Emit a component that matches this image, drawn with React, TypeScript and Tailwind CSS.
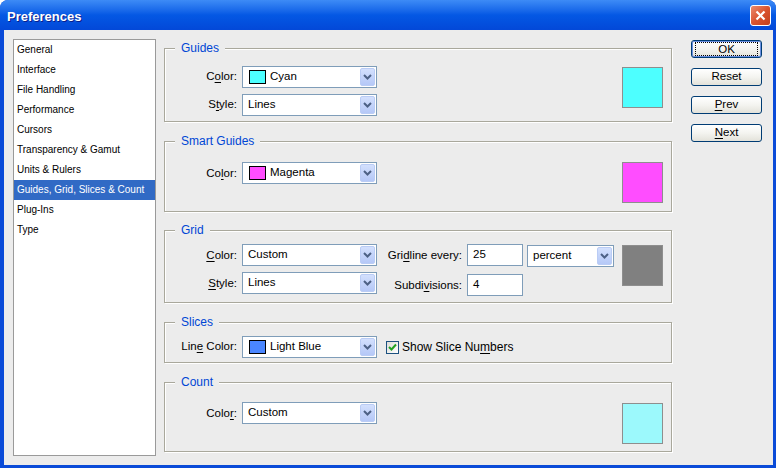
import type { ReactNode } from "react";

const Mn = ({ t, u }: { t: string; u: number }) => (
    <>
        {t.slice(0, u)}
        <span className="underline underline-offset-2">{t[u]}</span>
        {t.slice(u + 1)}
    </>
);

const Chevron = () => (
    <svg width="9" height="6" viewBox="0 0 9 6">
        <path d="M1 1 L4.5 4.5 L8 1" fill="none" stroke="#4D6185" strokeWidth="2" />
    </svg>
);

const Select = ({
    value,
    swatch,
    width = "w-[135px]",
}: {
    value: string;
    swatch?: string;
    width?: string;
}) => (
    <div className={`${width} h-[22px] border border-[#7F9DB9] bg-white flex items-stretch p-[1px]`}>
        <div className="flex items-center flex-1">
            {swatch && (
                <span
                    className="ml-[5px] w-[17px] h-[14px] border border-black"
                    style={{ backgroundColor: swatch }}
                />
            )}
            <span className="ml-[4px]">{value}</span>
        </div>
        <div className="w-[15px] rounded-[2px] border border-[#BACCF5] bg-gradient-to-b from-[#D3E0FD] to-[#B5C8F7] flex items-center justify-center">
            <Chevron />
        </div>
    </div>
);

const Field = ({ value }: { value: string }) => (
    <div className="w-[56px] h-[22px] border border-[#7F9DB9] bg-white flex items-center pl-[5px]">
        {value}
    </div>
);

const Label = ({ children, width = "w-[72px]" }: { children: ReactNode; width?: string }) => (
    <div className={`${width} text-right mr-[5px] whitespace-nowrap`}>{children}</div>
);

const Swatch = ({ color, className = "" }: { color: string; className?: string }) => (
    <div
        className={`w-[41px] h-[41px] border border-[#8E8E8E] ml-auto mr-[8px] ${className}`}
        style={{ backgroundColor: color }}
    />
);

const Group = ({
    title,
    className,
    children,
}: {
    title: string;
    className: string;
    children: ReactNode;
}) => (
    <div
        className={`relative w-[508px] border border-[#A9A89C] shadow-[inset_1px_1px_0_#fff,1px_1px_0_#fff] flex ${className}`}
    >
        <div className="absolute -top-[8px] left-[10px] px-[6px] bg-[#ECECEC] text-[12px] leading-[14px] text-[#0046D5]">
            {title}
        </div>
        {children}
    </div>
);

const XpButton = ({ children, def }: { children: ReactNode; def?: boolean }) => (
    <div
        className={`w-[71px] h-[18px] rounded-[3px] border border-[#003C74] bg-gradient-to-b from-white via-[#F4F4F0] to-[#E3E2DA] flex items-center justify-center ${
            def ? "shadow-[inset_0_0_0_1px_#6A8FE0]" : ""
        }`}
    >
        {def ? (
            <span className="border border-dotted border-black w-[63px] text-center leading-[12px]">{children}</span>
        ) : (
            children
        )}
    </div>
);

const items = [
    "General",
    "Interface",
    "File Handling",
    "Performance",
    "Cursors",
    "Transparency & Gamut",
    "Units & Rulers",
    "Guides, Grid, Slices & Count",
    "Plug-Ins",
    "Type",
];

export default function App() {
    return (
        <div className="w-[776px] h-[468px] flex flex-col bg-[#0A4BD8] rounded-t-[8px] overflow-hidden text-[11.5px] text-black font-['Liberation_Sans',Arial,sans-serif]">
            {/* title bar */}
            <div className="h-[30px] shrink-0 flex items-center justify-between pl-[7px] pr-[5px] pt-[1px] bg-gradient-to-b from-[#3D8BF6] via-[#0458E4] to-[#0348D8]">
                <span className="text-white font-bold text-[13px] mt-[3px] [text-shadow:1px_1px_0_#0A1E8C]">Preferences</span>
                <div className="w-[21px] h-[21px] rounded-[3px] border border-white bg-gradient-to-br from-[#EB8A6C] via-[#D9532F] to-[#C2401C] flex items-center justify-center">
                    <svg width="11" height="11" viewBox="0 0 11 11">
                        <path d="M1.5 1.5 L9.5 9.5 M9.5 1.5 L1.5 9.5" stroke="white" strokeWidth="2.2" />
                    </svg>
                </div>
            </div>

            {/* client area */}
            <div className="flex-1 ml-[4px] mr-[3px] mb-[3px] bg-[#ECECEC] flex pl-[9px] pt-[9px]">
                <div className="w-[143px] h-[417px] border border-[#9A9A9A] bg-white text-[10px]">
                    {items.map((it) => (
                        <div
                            key={it}
                            className={`h-[20px] leading-[20px] pl-[3px] whitespace-nowrap ${
                                it.startsWith("Guides") ? "bg-[#316AC5] text-white" : ""
                            }`}
                        >
                            {it}
                        </div>
                    ))}
                </div>

                <div className="ml-[8px] pt-[9px] flex flex-col">
                    <Group title="Guides" className="h-[74px] pt-[17px]">
                        <div className="flex flex-col gap-[6px]">
                            <div className="flex items-center">
                                <Label>
                                    <Mn t="Color:" u={1} />
                                </Label>
                                <Select value="Cyan" swatch="#4DFFFF" />
                            </div>
                            <div className="flex items-center">
                                <Label>
                                    <Mn t="Style:" u={1} />
                                </Label>
                                <Select value="Lines" />
                            </div>
                        </div>
                        <Swatch color="#4DFFFF" className="mt-[1px]" />
                    </Group>

                    <Group title="Smart Guides" className="h-[71px] mt-[19px] pt-[20px]">
                        <div className="flex items-start">
                            <Label>
                                <span className="leading-[22px]">
                                    <Mn t="Color:" u={2} />
                                </span>
                            </Label>
                            <Select value="Magenta" swatch="#FF4DFF" />
                        </div>
                        <Swatch color="#FF4DFF" />
                    </Group>

                    <Group title="Grid" className="h-[73px] mt-[18px] pt-[13px]">
                        <div className="flex flex-col gap-[6px]">
                            <div className="flex items-start h-[22px]">
                                <Label>
                                    <span className="leading-[22px]">
                                        <Mn t="Color:" u={0} />
                                    </span>
                                </Label>
                                <Select value="Custom" />
                                <Label width="w-[85px]">
                                    <span className="leading-[22px]">
                                        <Mn t="Gridline every:" u={3} />
                                    </span>
                                </Label>
                                <Field value="25" />
                                <div className="ml-[4px] mt-[1px]">
                                    <Select value="percent" width="w-[87px]" />
                                </div>
                            </div>
                            <div className="flex items-start h-[22px]">
                                <Label>
                                    <span className="leading-[22px]">
                                        <Mn t="Style:" u={0} />
                                    </span>
                                </Label>
                                <Select value="Lines" />
                                <Label width="w-[85px]">
                                    <span className="leading-[26px]">
                                        <Mn t="Subdivisions:" u={5} />
                                    </span>
                                </Label>
                                <div className="mt-[2px]">
                                    <Field value="4" />
                                </div>
                            </div>
                        </div>
                        <Swatch color="#808080" className="mt-[1px]" />
                    </Group>

                    <Group title="Slices" className="h-[41px] mt-[19px] pt-[13px]">
                        <div className="flex items-center h-[22px]">
                            <Label>
                                <Mn t="Line Color:" u={3} />
                            </Label>
                            <Select value="Light Blue" swatch="#4A86FF" />
                            <div className="ml-[9px] w-[13px] h-[13px] border border-[#1C5180] bg-gradient-to-br from-[#DCDCD7] to-white flex items-center justify-center">
                                <svg width="9" height="9" viewBox="0 0 9 9">
                                    <path d="M1 4 L3.5 6.5 L8 1.5" fill="none" stroke="#21A121" strokeWidth="2" />
                                </svg>
                            </div>
                            <span className="ml-[3px] text-[12px]">
                                <Mn t="Show Slice Numbers" u={13} />
                            </span>
                        </div>
                    </Group>

                    <Group title="Count" className="h-[70px] mt-[19px] pt-[19px]">
                        <div className="flex items-start">
                            <Label>
                                <span className="leading-[22px]">
                                    <Mn t="Color:" u={4} />
                                </span>
                            </Label>
                            <Select value="Custom" />
                        </div>
                        <Swatch color="#9CF9FC" className="mt-[1px]" />
                    </Group>
                </div>

                <div className="ml-[19px] pt-[1px] flex flex-col gap-[10px]">
                    <XpButton def>OK</XpButton>
                    <XpButton>Reset</XpButton>
                    <XpButton>
                        <Mn t="Prev" u={0} />
                    </XpButton>
                    <XpButton>
                        <Mn t="Next" u={0} />
                    </XpButton>
                </div>
            </div>
        </div>
    );
}
